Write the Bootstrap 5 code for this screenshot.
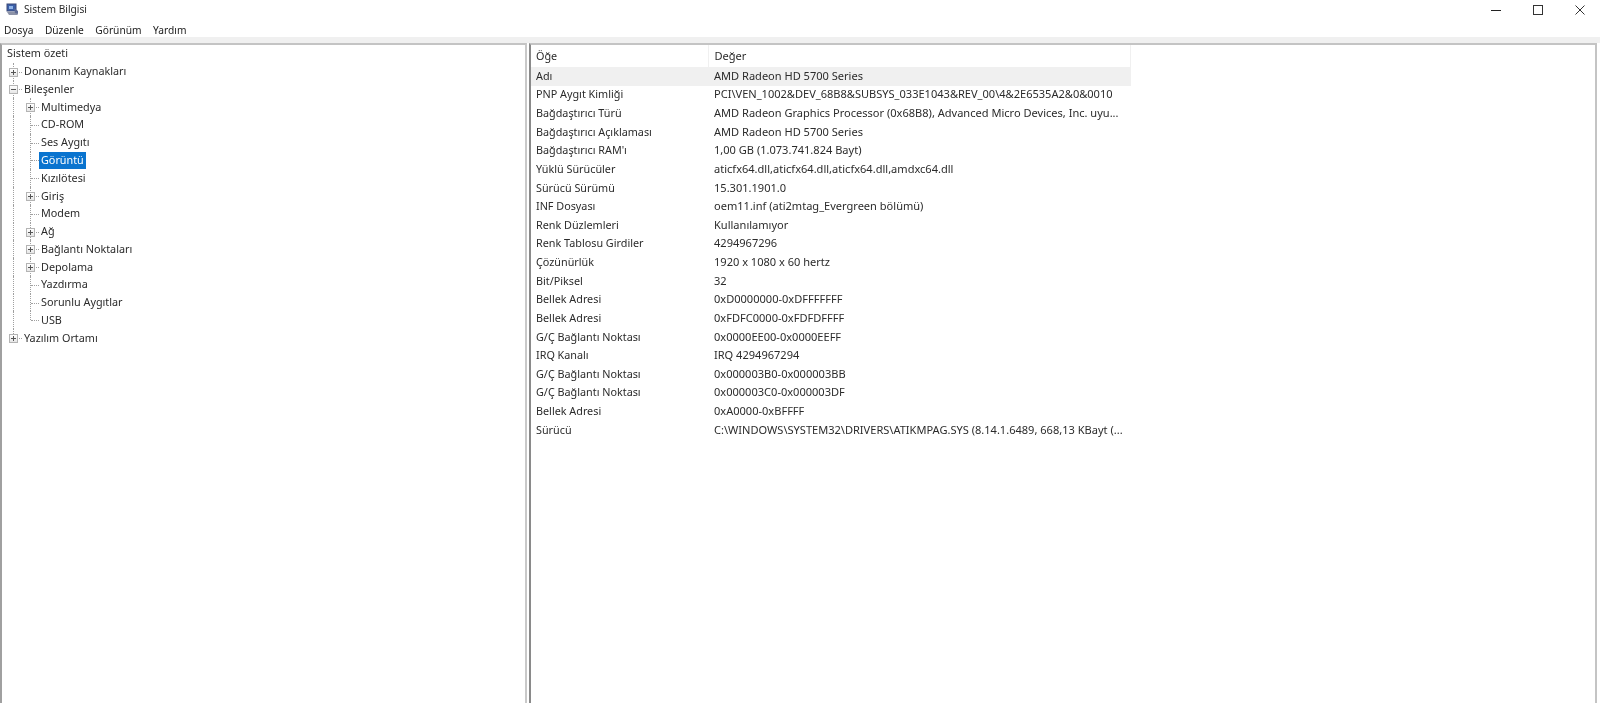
<!DOCTYPE html>
<html lang="tr">
<head>
<meta charset="utf-8">
<title>Sistem Bilgisi</title>
<link href="https://cdn.jsdelivr.net/npm/bootstrap@5.3.0/dist/css/bootstrap.min.css" rel="stylesheet">
<style>
html,body{height:100%;overflow:hidden}
body{font-family:"Noto Sans","Open Sans",sans-serif;font-size:10.8px;line-height:16px;color:#2b2b2b;background:#fff}
.app-shell{height:703px;filter:blur(.3px)}
.title-bar{height:22px;padding:0 0 2px 6px}
.title-bar .app-name{margin-left:5px;position:relative;top:-1px;font-size:10.2px}
.win-btn{width:42px;height:16px;color:#333}
.win-btns{margin-right:-1px}
.menu-bar{height:15px;padding-left:4px;gap:11.5px;align-items:center;font-size:10.2px}
.menu-bar span{color:#222}
.band{height:6px;background:#f0f0f0}
.panes{flex:1;min-height:0;padding-right:3px;gap:2px;background:#fff}
.tree-pane{width:527px;flex:none;border-left:2px solid #a0a0a0;border-top:2px solid #c4c4c4;border-right:2px solid #c9c9c9;padding:0 0 0 3px}
.detail-pane{flex:1;border-left:2px solid #8a8a8a;border-top:2px solid #c4c4c4;border-right:2px solid #c4c4c4}
.t-row{display:flex;height:17.77px;align-items:stretch}
.guide{width:17px;flex:none;position:relative}
.guide.line::before{content:"";position:absolute;left:8px;top:0;bottom:0;border-left:1px dotted #a0a0a0}
.guide.last::before{bottom:50%}
.guide.stem::after{content:"";position:absolute;left:9px;top:50%;width:8px;border-top:1px dotted #a0a0a0}
.box{position:absolute;left:4px;top:calc(50% - 4px);width:9px;height:9px;border:1px solid #b4b4b4;background:linear-gradient(#fff,#e6e6e6);z-index:1}
.box::before{content:"";position:absolute;left:1px;right:1px;top:3px;border-top:1px solid #555}
.box.plus::after{content:"";position:absolute;top:1px;bottom:1px;left:3px;border-left:1px solid #555}
.t-label{padding:0 2px;align-self:center;line-height:15.5px;height:17px;white-space:nowrap}
.t-label.sel{background:#0a74cf;color:#fff}
.info-table{width:600px;table-layout:fixed;border-collapse:collapse;margin:0}
.info-table th,.info-table td{padding:0 0 2px 5px;font-weight:400;white-space:nowrap;border:0;color:#2b2b2b;background:transparent;box-shadow:none;vertical-align:middle;line-height:15px}
.info-table th+th,.info-table td+td{padding-left:6px;font-size:11.05px}
.info-table thead th{height:22px;border-right:1px solid #f0f0f0}
.info-table tbody td{height:18.63px}
.info-table tbody tr.hl td{background:#f0f0f0}
.col-a{width:177px}
</style>
</head>
<body>
<div class="app-shell d-flex flex-column">
  <div class="title-bar d-flex align-items-center justify-content-between">
    <div class="d-flex align-items-center">
      <svg width="13" height="14" viewBox="0 0 13 14"><rect x="1" y="1" width="9" height="7" fill="#3a5fa8" stroke="#3c4a78"/><rect x="3" y="3" width="4" height="3" fill="#8fb4e8"/><path d="M1 9h9l2 3H3z" fill="#8d93a8"/><path d="M8 5l4 3v3l-3-1z" fill="#5d6a94"/></svg>
      <span class="app-name">Sistem Bilgisi</span>
    </div>
    <div class="win-btns d-flex">
      <div class="win-btn d-flex align-items-center justify-content-center"><svg width="10" height="10" viewBox="0 0 10 10"><path d="M0 5.5h10" stroke="#222"/></svg></div>
      <div class="win-btn d-flex align-items-center justify-content-center"><svg width="10" height="10" viewBox="0 0 10 10"><rect x=".5" y=".5" width="9" height="9" fill="none" stroke="#333"/></svg></div>
      <div class="win-btn d-flex align-items-center justify-content-center"><svg width="10" height="10" viewBox="0 0 10 10"><path d="M.5.5l9 9M9.5.5l-9 9" stroke="#333"/></svg></div>
    </div>
  </div>
  <div class="menu-bar d-flex"><span>Dosya</span><span>Düzenle</span><span>Görünüm</span><span>Yardım</span></div>
  <div class="band"></div>
  <div class="panes d-flex">
    <div class="tree-pane">
      <div class="t-row"><span class="t-label">Sistem özeti</span></div>
      <div class="t-row"><span class="guide line stem"><i class="box plus"></i></span><span class="t-label">Donanım Kaynakları</span></div>
      <div class="t-row"><span class="guide line stem"><i class="box"></i></span><span class="t-label">Bileşenler</span></div>
      <div class="t-row"><span class="guide line"></span><span class="guide line stem"><i class="box plus"></i></span><span class="t-label">Multimedya</span></div>
      <div class="t-row"><span class="guide line"></span><span class="guide line stem"></span><span class="t-label">CD-ROM</span></div>
      <div class="t-row"><span class="guide line"></span><span class="guide line stem"></span><span class="t-label">Ses Aygıtı</span></div>
      <div class="t-row"><span class="guide line"></span><span class="guide line stem"></span><span class="t-label sel">Görüntü</span></div>
      <div class="t-row"><span class="guide line"></span><span class="guide line stem"></span><span class="t-label">Kızılötesi</span></div>
      <div class="t-row"><span class="guide line"></span><span class="guide line stem"><i class="box plus"></i></span><span class="t-label">Giriş</span></div>
      <div class="t-row"><span class="guide line"></span><span class="guide line stem"></span><span class="t-label">Modem</span></div>
      <div class="t-row"><span class="guide line"></span><span class="guide line stem"><i class="box plus"></i></span><span class="t-label">Ağ</span></div>
      <div class="t-row"><span class="guide line"></span><span class="guide line stem"><i class="box plus"></i></span><span class="t-label">Bağlantı Noktaları</span></div>
      <div class="t-row"><span class="guide line"></span><span class="guide line stem"><i class="box plus"></i></span><span class="t-label">Depolama</span></div>
      <div class="t-row"><span class="guide line"></span><span class="guide line stem"></span><span class="t-label">Yazdırma</span></div>
      <div class="t-row"><span class="guide line"></span><span class="guide line stem"></span><span class="t-label">Sorunlu Aygıtlar</span></div>
      <div class="t-row"><span class="guide line"></span><span class="guide line last stem"></span><span class="t-label">USB</span></div>
      <div class="t-row"><span class="guide line last stem"><i class="box plus"></i></span><span class="t-label">Yazılım Ortamı</span></div>
    </div>
    <div class="detail-pane">
      <table class="table info-table">
        <thead><tr><th class="col-a">Öğe</th><th>Değer</th></tr></thead>
        <tbody>
          <tr class="hl"><td>Adı</td><td>AMD Radeon HD 5700 Series</td></tr>
          <tr><td>PNP Aygıt Kimliği</td><td>PCI\VEN_1002&amp;DEV_68B8&amp;SUBSYS_033E1043&amp;REV_00\4&amp;2E6535A2&amp;0&amp;0010</td></tr>
          <tr><td>Bağdaştırıcı Türü</td><td>AMD Radeon Graphics Processor (0x68B8), Advanced Micro Devices, Inc. uyu...</td></tr>
          <tr><td>Bağdaştırıcı Açıklaması</td><td>AMD Radeon HD 5700 Series</td></tr>
          <tr><td>Bağdaştırıcı RAM'ı</td><td>1,00 GB (1.073.741.824 Bayt)</td></tr>
          <tr><td>Yüklü Sürücüler</td><td>aticfx64.dll,aticfx64.dll,aticfx64.dll,amdxc64.dll</td></tr>
          <tr><td>Sürücü Sürümü</td><td>15.301.1901.0</td></tr>
          <tr><td>INF Dosyası</td><td>oem11.inf (ati2mtag_Evergreen bölümü)</td></tr>
          <tr><td>Renk Düzlemleri</td><td>Kullanılamıyor</td></tr>
          <tr><td>Renk Tablosu Girdiler</td><td>4294967296</td></tr>
          <tr><td>Çözünürlük</td><td>1920 x 1080 x 60 hertz</td></tr>
          <tr><td>Bit/Piksel</td><td>32</td></tr>
          <tr><td>Bellek Adresi</td><td>0xD0000000-0xDFFFFFFF</td></tr>
          <tr><td>Bellek Adresi</td><td>0xFDFC0000-0xFDFDFFFF</td></tr>
          <tr><td>G/Ç Bağlantı Noktası</td><td>0x0000EE00-0x0000EEFF</td></tr>
          <tr><td>IRQ Kanalı</td><td>IRQ 4294967294</td></tr>
          <tr><td>G/Ç Bağlantı Noktası</td><td>0x000003B0-0x000003BB</td></tr>
          <tr><td>G/Ç Bağlantı Noktası</td><td>0x000003C0-0x000003DF</td></tr>
          <tr><td>Bellek Adresi</td><td>0xA0000-0xBFFFF</td></tr>
          <tr><td>Sürücü</td><td>C:\WINDOWS\SYSTEM32\DRIVERS\ATIKMPAG.SYS (8.14.1.6489, 668,13 KBayt (...</td></tr>
        </tbody>
      </table>
    </div>
  </div>
</div>
<script src="https://cdn.jsdelivr.net/npm/bootstrap@5.3.0/dist/js/bootstrap.bundle.min.js"></script>
</body>
</html>
